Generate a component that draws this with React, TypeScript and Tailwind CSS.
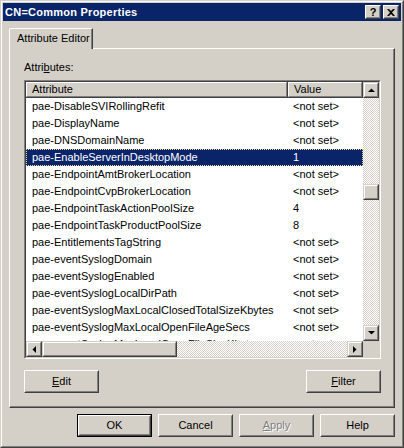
import type { ReactNode } from 'react';

type Row = { name: string; value: string; selected?: boolean };

const rows: Row[] = [
  { name: 'pae-DisableSVIRollingRefit', value: '<not set>' },
  { name: 'pae-DisplayName', value: '<not set>' },
  { name: 'pae-DNSDomainName', value: '<not set>' },
  { name: 'pae-EnableServerInDesktopMode', value: '1', selected: true },
  { name: 'pae-EndpointAmtBrokerLocation', value: '<not set>' },
  { name: 'pae-EndpointCvpBrokerLocation', value: '<not set>' },
  { name: 'pae-EndpointTaskActionPoolSize', value: '4' },
  { name: 'pae-EndpointTaskProductPoolSize', value: '8' },
  { name: 'pae-EntitlementsTagString', value: '<not set>' },
  { name: 'pae-eventSyslogDomain', value: '<not set>' },
  { name: 'pae-eventSyslogEnabled', value: '<not set>' },
  { name: 'pae-eventSyslogLocalDirPath', value: '<not set>' },
  { name: 'pae-eventSyslogMaxLocalClosedTotalSizeKbytes', value: '<not set>' },
  { name: 'pae-eventSyslogMaxLocalOpenFileAgeSecs', value: '<not set>' },
  { name: 'pae-eventSyslogMaxLocalOpenFileSizeKbytes', value: '<not set>' },
];

// classic push button bevel
const Btn = ({ children, className = '', isDefault = false }: { children: ReactNode; className?: string; isDefault?: boolean }) => (
  <div className={`w-[75px] h-[23px] ${isDefault ? 'border border-black' : ''} ${className}`}>
    <div className="h-full border border-t-white border-l-white border-r-[#404040] border-b-[#404040]">
      <div className="h-full border border-t-[#d4d0c8] border-l-[#d4d0c8] border-r-[#808080] border-b-[#808080] flex items-center justify-center">
        {children}
      </div>
    </div>
  </div>
);

// scrollbar button / thumb bevel
const ScrollBtn = ({ children, className = '' }: { children?: ReactNode; className?: string }) => (
  <div className={`w-[16px] h-[16px] bg-[#d4d0c8] border border-t-[#d4d0c8] border-l-[#d4d0c8] border-r-[#404040] border-b-[#404040] ${className}`}>
    <div className="h-full border border-t-white border-l-white border-r-[#808080] border-b-[#808080] flex items-center justify-center">
      {children}
    </div>
  </div>
);

const Arrow = ({ dir }: { dir: 'up' | 'down' | 'left' | 'right' }) => {
  const pts = {
    up: '0,4 3.5,0.5 7,4',
    down: '0,0 7,0 3.5,3.5',
    left: '4,0 4,7 0.5,3.5',
    right: '0,0 0,7 3.5,3.5',
  }[dir];
  const horiz = dir === 'left' || dir === 'right';
  return (
    <svg width={horiz ? 4 : 7} height={horiz ? 7 : 4} viewBox={horiz ? '0 0 4 7' : '0 0 7 4'}>
      <polygon points={pts} fill="#000" />
    </svg>
  );
};

const track = 'bg-[repeating-conic-gradient(#d4d0c8_0_25%,#ffffff_0_50%)] bg-[length:2px_2px]';

const HeaderCell = ({ children, w }: { children: ReactNode; w: string }) => (
  <div className={`${w} h-[16px] border-r border-b border-r-[#404040] border-b-[#404040] shrink-0`}>
    <div className="h-full border border-t-white border-l-white border-r-[#808080] border-b-[#808080] pl-[5px] leading-[13px]">
      {children}
    </div>
  </div>
);

export default function App() {
  return (
    <div
      className="w-[404px] h-[448px] bg-[#d4d0c8] text-[11px] text-black border border-t-[#d4d0c8] border-l-[#d4d0c8] border-r-[#404040] border-b-[#404040]"
      style={{ fontFamily: '"Liberation Sans", Arial, sans-serif' }}
    >
      <div className="h-full border border-t-white border-l-white border-r-[#808080] border-b-[#808080] p-[1px] flex flex-col">
        {/* title bar */}
        <div className="h-[18px] bg-[#0a246a] flex items-center pl-[2px] pr-[2px]">
          <span className="text-white font-bold text-[11px] tracking-[0.25px] flex-1">CN=Common Properties</span>
          <div className="flex gap-[2px]">
            <div className="w-[16px] h-[14px] bg-[#d4d0c8] border border-t-white border-l-white border-r-[#404040] border-b-[#404040]">
              <div className="h-full border border-t-[#d4d0c8] border-l-[#d4d0c8] border-r-[#808080] border-b-[#808080] flex items-center justify-center font-bold text-[11px] leading-none">
                ?
              </div>
            </div>
            <div className="w-[16px] h-[14px] bg-[#d4d0c8] border border-t-white border-l-white border-r-[#404040] border-b-[#404040]">
              <div className="h-full border border-t-[#d4d0c8] border-l-[#d4d0c8] border-r-[#808080] border-b-[#808080] flex items-center justify-center">
                <svg width="8" height="7" viewBox="0 0 8 7">
                  <path d="M0 0h2l2 2 2-2h2L5 3.5 8 7H6L4 5 2 7H0l3-3.5z" fill="#000" />
                </svg>
              </div>
            </div>
          </div>
        </div>

        {/* tab strip */}
        <div className="mt-[7px] ml-[6px] flex">
          <div className="relative z-10 -mb-[1px] w-[84px] h-[21px] bg-[#d4d0c8] border-l border-t border-l-white border-t-white rounded-tl-[2px] border-r border-r-[#404040]">
            <div className="h-full border-r border-r-[#808080] pl-[7px] pt-[3px] leading-[13px]">Attribute Editor</div>
          </div>
        </div>

        {/* tab panel */}
        <div className="mx-[6px] h-[360px] border border-t-white border-l-white border-r-[#404040] border-b-[#404040]">
          <div className="h-full border-r border-b border-r-[#808080] border-b-[#808080] pl-[14px] pt-[12px] flex flex-col">
            <div className="h-[13px] leading-[13px]">
              Attri<span className="underline">b</span>utes:
            </div>

            {/* list view */}
            <div className="mt-[6px] w-[357px] h-[279px] border border-t-[#808080] border-l-[#808080] border-r-white border-b-white">
              <div className="h-full border border-t-[#404040] border-l-[#404040] border-r-[#d4d0c8] border-b-[#d4d0c8] flex bg-white">
                <div className="w-[337px] flex flex-col">
                  <div className="flex bg-[#d4d0c8]">
                    <HeaderCell w="w-[262px]">Attribute</HeaderCell>
                    <HeaderCell w="w-[75px]">Value</HeaderCell>
                  </div>
                  <div className="h-[243px] overflow-hidden">
                    {rows.map((r) => (
                      <div
                        key={r.name}
                        className={`h-[17px] flex items-center whitespace-nowrap ${
                          r.selected ? 'bg-[#0a246a] text-white border border-dotted border-[#f5db95]' : 'border border-transparent'
                        }`}
                      >
                        <div className="w-[261px] pl-[5px] shrink-0">{r.name}</div>
                        <div className="pl-[5px]">{r.value}</div>
                      </div>
                    ))}
                  </div>
                  {/* horizontal scrollbar */}
                  <div className={`h-[16px] flex ${track}`}>
                    <ScrollBtn>
                      <Arrow dir="left" />
                    </ScrollBtn>
                    <ScrollBtn className="w-[135px]" />
                    <div className="flex-1" />
                    <ScrollBtn>
                      <Arrow dir="right" />
                    </ScrollBtn>
                  </div>
                </div>

                {/* vertical scrollbar */}
                <div className="w-[16px] flex flex-col">
                  <div className={`h-[259px] flex flex-col ${track}`}>
                    <ScrollBtn>
                      <Arrow dir="up" />
                    </ScrollBtn>
                    <div className="h-[86px]" />
                    <ScrollBtn />
                    <div className="flex-1" />
                    <ScrollBtn>
                      <Arrow dir="down" />
                    </ScrollBtn>
                  </div>
                  <div className="flex-1 bg-[#d4d0c8]" />
                </div>
              </div>
            </div>

            <div className="mt-[11px] w-[357px] flex justify-between">
              <Btn>
                <span>
                  <span className="underline">E</span>dit
                </span>
              </Btn>
              <Btn>
                <span>
                  <span className="underline">F</span>ilter
                </span>
              </Btn>
            </div>
          </div>
        </div>

        {/* dialog buttons */}
        <div className="mt-[6px] pr-[6px] flex justify-end gap-[6px]">
          <Btn isDefault>OK</Btn>
          <Btn>Cancel</Btn>
          <Btn>
            <span className="text-[#808080] [text-shadow:1px_1px_0_#ffffff]">
              <span className="underline">A</span>pply
            </span>
          </Btn>
          <Btn>Help</Btn>
        </div>
      </div>
    </div>
  );
}
